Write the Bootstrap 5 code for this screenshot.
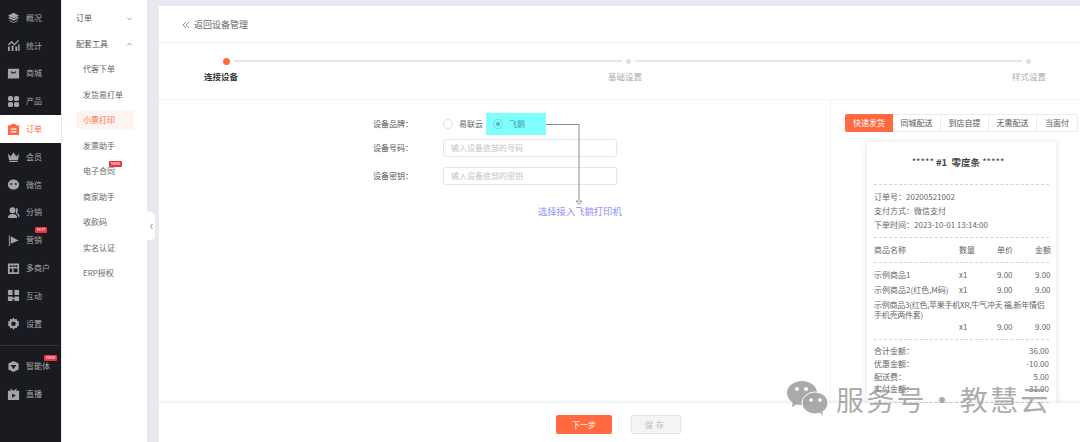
<!doctype html>
<html lang="zh"><head><meta charset="utf-8"><title>小票打印</title>
<link rel="stylesheet" href="https://cdn.jsdelivr.net/npm/bootstrap@5.3.0/dist/css/bootstrap.min.css">
<style>
html,body{height:442px;overflow:hidden}
body{font-family:"Noto Sans CJK SC","Liberation Sans",sans-serif;font-size:8px;color:#555;background:#e8e9ee;position:relative}
.shell{height:442px}
.rail{width:61px;background:#1a1b21;padding-top:4px;flex:none}
.rail-item{height:27.8px;padding-left:7px;color:#a9a9ab;gap:6px;position:relative;font-size:8px}
.rail-item svg{width:13px;height:13px;fill:#a5a5a8;flex:none}
.rail-item.on{background:#fff;color:#ff6a40}
.rail-item.on svg{fill:#ff6a40}
.rail-sep{border-top:1px solid #2f3036;margin:7px 0 7px}
.tag{position:absolute;background:#e93340;color:#fff;font-size:4px;line-height:6px;padding:0 2px;border-radius:1px;font-family:"Liberation Sans",sans-serif}
.sub{width:85px;background:#fff;padding:5px 14px 0 14px;margin-left:1px;flex:none;position:relative;color:#666}
.sub-h{height:26px;font-size:8px;color:#555}
.sub-h.open{margin-bottom:3px}
.sub-i{height:18px;margin-bottom:7.5px;padding-left:7px;width:58px;position:relative;white-space:nowrap}
.sub-i.on{background:#fff3ef;color:#ff6a40;border-radius:2px}
.sub-h svg{width:7px;height:7px;fill:none;stroke:#888;stroke-width:1}
.grip{position:absolute;left:85px;top:212px;width:8px;height:28px;background:#fff;border-radius:0 5px 5px 0;z-index:2}
.grip svg{width:5px;height:7px;fill:none;stroke:#888;stroke-width:1}
.gut{width:12px;flex:none}
.page{margin-top:6px;background:#fff;min-width:0;overflow:hidden}
.back{height:37px;border-bottom:1px solid #f1f1f3;padding:2px 0 0 23px;font-size:9px;color:#666;gap:4px;flex:none}
.back svg{width:8px;height:8px;fill:none;stroke:#888;stroke-width:.9}
.steps{height:57px;border-bottom:1px solid #f4f4f6;flex:none;padding:14px 0 0 0}
.track{padding:0 49px 0 64px;gap:4px;height:8px}
.pt{width:5px;height:5px;border-radius:50%;background:#dedfe3;flex:none}
.pt.on{width:7px;height:7px;background:#ff6a40}
.ln{height:2px;background:#e5e5e7;flex:1}
.labels{padding:5px 34px 0 45px;font-size:8.5px;color:#aaa}
.labels b{color:#333;font-weight:700}
.body{min-height:0;overflow:hidden}
.formside{position:relative;padding:13px 0 0 214px;width:671px;flex:none}
.f-row{height:28px}
.f-first{height:22px;margin-bottom:-1px}
.f-lab{width:70px;color:#555;flex:none}
.radio{width:10px;height:10px;border:1px solid #dcdde0;border-radius:50%;display:inline-block;flex:none}
.f-radio-row{gap:6px;color:#666}
.hl{width:60px;height:22px;background:#80ffff;padding-left:7px;gap:6px;color:#3aa0a0;margin-left:-3px}
.radio.sel{border-color:#8bcfcf;position:relative}
.radio.sel::after{content:"";position:absolute;inset:2px;border-radius:50%;background:#4fb6b6}
.f-in{width:174px;height:18px;border:1px solid #e6e7ea;border-radius:2px;padding-left:7px;color:#c4c4c4;font-size:8px}
.note{position:absolute;left:379px;top:105px;color:#8f8ff5;font-size:9.3px;white-space:nowrap;line-height:12px}
.arrow{position:absolute;left:386px;top:20px;width:40px;height:90px}
.preview{border-left:1px solid #f1f1f3;padding:14px 0 0 14px;min-width:0;width:250px;flex:none}
.tabs{height:18px;width:233px}
.tb{width:48px;border:1px solid #ececee;border-left:0;color:#555;font-size:8px;white-space:nowrap}
.tb.on{background:#ff6a40;color:#fff;border:0;border-radius:2px 0 0 2px}
.tb.last{width:41px;border-radius:0 2px 2px 0}
.slip{margin:10px 0 0 22px;width:189px;padding:12px 7px 0 7px;box-shadow:0 0 6px rgba(0,0,0,.12);background:#fff;font-size:8px;color:#666;height:280px;border-radius:1px}
.slip-t{text-align:center;font-size:9.5px;color:#444;line-height:16px;height:30px;white-space:pre;padding-right:7px}
.slip-t b{font-weight:700}
.dash{border-top:1px dashed #d4d4d4}
.ln14{line-height:14px}
.meta{margin:5px 0}
.cols{display:grid;grid-template-columns:85px 38px 38px 14px;line-height:15.4px;white-space:nowrap}
.cols.hd{line-height:24px;height:24px}
.gap4{margin-bottom:4px}
.sm{line-height:10.5px;margin:2px 0 -1.5px;letter-spacing:-.25px}
.tot{line-height:12.6px}
.tots{margin-top:5.7px;margin-bottom:6px}
.foot{height:39px;background:#fff;box-shadow:0 -1px 4px rgba(0,0,0,.09);gap:19px;position:relative;flex:none;padding:4px 2px 0 0}
.b1,.b2{height:19px;width:56px;border-radius:2px;font-size:8px;padding:0;border:0}
.b1{background:#ff6a40;color:#fff}
.b2{background:#f4f4f4;color:#bbb;border:1px solid #e4e4e4;width:50px;letter-spacing:3px}
.wm{position:absolute;left:787px;top:381px;z-index:5;gap:8px;color:rgba(150,150,150,.8);font-size:28px;line-height:34px;letter-spacing:2.2px;word-spacing:-7px;white-space:nowrap;pointer-events:none}
.wm svg{width:41px;height:35px;fill:rgba(165,165,165,.95)}
</style></head><body>
<div class="shell d-flex">
<nav class="rail d-flex flex-column">
<div class="rail-item d-flex align-items-center"><svg viewBox="0 0 14 14"><path d="M7 2l6 3-6 3-6-3z"/><path d="M1 7.500l2-1 4 2 4-2 2 1-6 3z"/><path d="M3 10l4 2 4-2 1 .6-5 2.400-5-2.400z"/></svg>概况</div>
<div class="rail-item d-flex align-items-center"><svg viewBox="0 0 14 14"><path d="M1 13V8h2v5zM5 13V7h2v6zM9 13V8h2v5zM12 13V6h1.500v7z"/><path d="M1 6l4-4 3 3 4-4 1 1-5 5-3-3-3 3z"/></svg>统计</div>
<div class="rail-item d-flex align-items-center"><svg viewBox="0 0 14 14"><path fill-rule="evenodd" d="M1 2h12v10.500H1zM4 5c.5 2.500 5.500 2.500 6 0l-1-.4c-.5 1.600-3.500 1.600-4 0z"/></svg>商城</div>
<div class="rail-item d-flex align-items-center"><svg viewBox="0 0 14 14"><rect x="1" y="1" width="5.500" height="5.500" rx="2"/><rect x="7.500" y="1" width="5.500" height="5.500" rx="2"/><rect x="1" y="7.500" width="5.500" height="5.500" rx="2"/><rect x="7.500" y="7.500" width="5.500" height="5.500" rx="2"/></svg>产品</div>
<div class="rail-item d-flex align-items-center on"><svg viewBox="0 0 14 14"><path fill-rule="evenodd" d="M4.500 1h5v1.500H13V13H1V2.500h3.500zM4 6v1.300h6V6zM4 9v1.300h6V9z"/></svg>订单</div>
<div class="rail-item d-flex align-items-center"><svg viewBox="0 0 14 14"><path d="M1 4l3 3 3-4.500L10 7l3-3-1.200 7H2.200zM2.500 11.800h9V13h-9z"/></svg>会员</div>
<div class="rail-item d-flex align-items-center"><svg viewBox="0 0 14 14"><path fill-rule="evenodd" d="M7 1.500c3.500 0 6 2.300 6 5.500s-2.500 5.500-6 5.500S1 10.200 1 7s2.500-5.500 6-5.500zM4.500 5.500a1 1 0 100 2 1 1 0 000-2zm5 0a1 1 0 100 2 1 1 0 000-2z"/></svg>微信</div>
<div class="rail-item d-flex align-items-center"><svg viewBox="0 0 14 14"><circle cx="6" cy="4.500" r="3.200"/><path d="M1 13c0-3 2-4.500 5-4.500s5 1.500 5 4.500zM10 2c2 .5 2.500 4 .5 5.500 2 .5 3 2 3 4h-1.500c0-1.500-1-3-2.500-3.500z"/></svg>分销</div>
<div class="rail-item d-flex align-items-center"><span class="tag" style="left:35px;top:1px">HOT</span><svg viewBox="0 0 14 14"><path d="M2 1.500h1V13H2zM4 2.500L12.500 7 4 10.500z"/></svg>营销</div>
<div class="rail-item d-flex align-items-center text-nowrap"><svg viewBox="0 0 14 14"><path fill-rule="evenodd" d="M1 1.500h12V13H1zM3 3.500v2h2v-2zm3 0v2h2v-2zm3 0v2h2v-2zM3 7v4h2.500V7zm4 0v4h4.500V7z"/></svg>多商户</div>
<div class="rail-item d-flex align-items-center"><svg viewBox="0 0 14 14"><rect x="1" y="1" width="5" height="5.500"/><rect x="8" y="1" width="5" height="5.500"/><path d="M1 8h5v1.500h2V8h5v5H8v-2H6v2H1z"/></svg>互动</div>
<div class="rail-item d-flex align-items-center"><svg viewBox="0 0 14 14"><path fill-rule="evenodd" d="M7 .8l1.300 1.700 2.200-.3.600 2.100 2 .9-.7 2 .7 2-2 .9-.6 2.100-2.200-.3L7 14l-1.300-2.100-2.200.3-.6-2.100-2-.9.7-2-.7-2 2-.9.6-2.100 2.200.3zM7 4.800a2.500 2.500 0 100 5 2.500 2.500 0 000-5z"/></svg>设置</div>
<div class="rail-sep"></div>
<div class="rail-item d-flex align-items-center text-nowrap"><span class="tag" style="left:44px;top:2px">NEW</span><svg viewBox="0 0 14 14"><path fill-rule="evenodd" d="M7 1l5.500 2.800v6.400L7 13l-5.500-2.800V3.800zM4 5.500L7 10l3-4.500z"/></svg>智能体</div>
<div class="rail-item d-flex align-items-center"><svg viewBox="0 0 14 14"><path fill-rule="evenodd" d="M4 .8L7 3l3-2.200.7.8L9 3h4v10H1V3h4L3.300 1.600zM5.500 6v4.500L9.500 8.200z"/></svg>直播</div>
</nav>
<aside class="sub">
<div class="sub-h d-flex align-items-center justify-content-between">订单<svg viewBox="0 0 8 8"><path d="M1.500 3L4 5.500 6.500 3"/></svg></div>
<div class="sub-h open d-flex align-items-center justify-content-between">配套工具<svg viewBox="0 0 8 8"><path d="M1.500 5L4 2.500 6.500 5"/></svg></div>
<div class="sub-i d-flex align-items-center">代客下单</div>
<div class="sub-i d-flex align-items-center">发货易打单</div>
<div class="sub-i d-flex align-items-center on">小票打印</div>
<div class="sub-i d-flex align-items-center">发票助手</div>
<div class="sub-i d-flex align-items-center">电子合同<span class="tag" style="left:33px;top:-1px">NEW</span></div>
<div class="sub-i d-flex align-items-center">商家助手</div>
<div class="sub-i d-flex align-items-center">收款码</div>
<div class="sub-i d-flex align-items-center">实名认证</div>
<div class="sub-i d-flex align-items-center">ERP授权</div>
<div class="grip d-flex align-items-center justify-content-center"><svg viewBox="0 0 5 7"><path d="M3.500 1L1.500 3.500 3.500 6"/></svg></div>
</aside>
<div class="gut"></div>
<main class="page flex-grow-1 d-flex flex-column">
<div class="back d-flex align-items-center"><svg viewBox="0 0 8 8"><path d="M4 1L1 4l3 3M7 1L4 4l3 3"/></svg>返回设备管理</div>
<div class="steps">
<div class="track d-flex align-items-center"><span class="pt on"></span><span class="ln"></span><span class="pt"></span><span class="ln"></span><span class="pt"></span></div>
<div class="labels d-flex justify-content-between"><b>连接设备</b><span>基础设置</span><span>样式设置</span></div>
</div>
<div class="body flex-grow-1 d-flex">
<section class="formside">
<div class="f-row f-first d-flex align-items-center"><span class="f-lab">设备品牌：</span><div class="f-radio-row d-flex align-items-center"><span class="radio"></span>易联云<div class="hl d-flex align-items-center"><span class="radio sel"></span>飞鹅</div></div></div>
<div class="f-row d-flex align-items-center"><span class="f-lab">设备号码：</span><div class="f-in d-flex align-items-center">输入设备底部的号码</div></div>
<div class="f-row d-flex align-items-center"><span class="f-lab">设备密钥：</span><div class="f-in d-flex align-items-center">输入设备底部的密钥</div></div>
<svg class="arrow" viewBox="0 0 40 90"><path d="M1 4.500H34V80" fill="none" stroke="#8a8a8a" stroke-width="1"/><path d="M31 81h6l-3 3.500z" fill="#fff" stroke="#777" stroke-width=".8"/></svg>
<div class="note">选择接入飞鹅打印机</div>
</section>
<section class="preview">
<div class="tabs d-flex"><div class="tb on d-flex align-items-center justify-content-center">快递发货</div><div class="tb d-flex align-items-center justify-content-center">同城配送</div><div class="tb d-flex align-items-center justify-content-center">到店自提</div><div class="tb d-flex align-items-center justify-content-center">无需配送</div><div class="tb last d-flex align-items-center justify-content-center">当面付</div></div>
<div class="slip">
<div class="slip-t">***** <b>#1  零度条</b> *****</div>
<div class="dash"></div>
<div class="meta"><div class="ln14">订单号：20200521002</div><div class="ln14">支付方式：微信支付</div><div class="ln14">下单时间：2023-10-01 13:14:00</div></div>
<div class="dash"></div>
<div class="cols hd"><span>商品名称</span><span>数量</span><span>单价</span><span>金额</span></div>
<div class="dash gap4"></div>
<div class="cols"><span>示例商品1</span><span>x1</span><span>9.00</span><span>9.00</span></div>
<div class="cols"><span>示例商品2(红色,M码)</span><span>x1</span><span>9.00</span><span>9.00</span></div>
<div class="sm">示例商品3(红色,苹果手机XR,牛气冲天 福,新年情侣手机壳两件套)</div>
<div class="cols gap4"><span></span><span>x1</span><span>9.00</span><span>9.00</span></div>
<div class="dash"></div>
<div class="tots">
<div class="tot d-flex justify-content-between"><span>合计金额：</span><span>36.00</span></div>
<div class="tot d-flex justify-content-between"><span>优惠金额：</span><span>-10.00</span></div>
<div class="tot d-flex justify-content-between"><span>配送费：</span><span>5.00</span></div>
<div class="tot d-flex justify-content-between"><span>实付金额：</span><span>31.00</span></div>
</div>
<div class="dash"></div>
</div>
</section>
</div>
<div class="foot d-flex align-items-center justify-content-center"><button class="b1">下一步</button><button class="b2">保存</button></div>
</main>
</div>
<div class="wm d-flex align-items-center"><svg viewBox="0 0 41 35"><ellipse cx="15" cy="12" rx="15" ry="12"/><path d="M6 19l-1 7 7-4z"/><ellipse cx="28" cy="22" rx="13" ry="11" stroke="#fff" stroke-width="1"/><path d="M33 31l3 4-1-6z"/><circle cx="10" cy="8" r="2" fill="#fff"/><circle cx="19" cy="8" r="2" fill="#fff"/><circle cx="24" cy="19" r="1.800" fill="#fff"/><circle cx="33" cy="19" r="1.800" fill="#fff"/></svg><span>服务号 · 教慧云</span></div>
</body></html>
